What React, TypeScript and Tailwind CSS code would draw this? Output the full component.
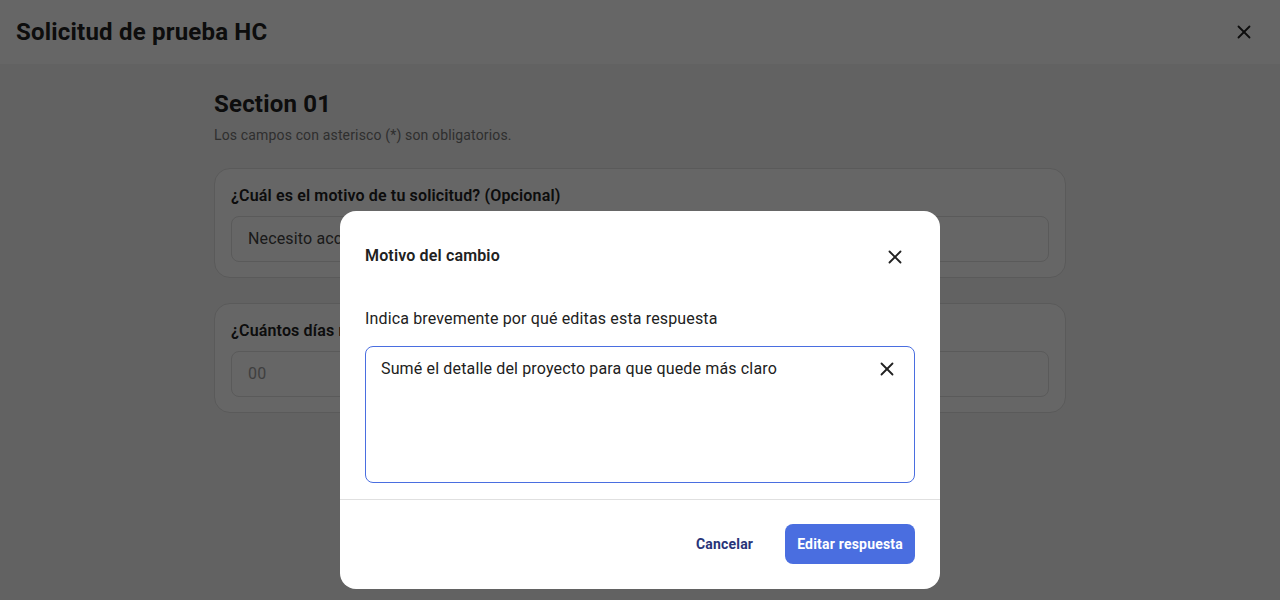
import { X } from "lucide-react";

const font = { fontFamily: "Roboto, 'Noto Sans', Arial, sans-serif" };

function Field({ label, value, muted }: { label: string; value: string; muted?: boolean }) {
  return (
    <div className="h-[110px] rounded-2xl border border-[#e0e0e0] bg-white px-4 pt-[15px]">
      <p className="text-base font-semibold leading-6 tracking-[0.15px] text-[#212121]">{label}</p>
      <div className="mt-[8px] flex h-[46px] items-center rounded-lg border border-[#e0e0e0] px-4">
        <span className={`text-base tracking-[0.15px] ${muted ? "text-[#9e9e9e]" : "text-[#424242]"}`}>{value}</span>
      </div>
    </div>
  );
}

export default function App() {
  return (
    <div className="relative h-[600px] w-full overflow-hidden bg-[#f5f5f5]" style={font}>
      {/* Page under the overlay */}
      <header className="flex h-16 items-center justify-between bg-white px-4">
        <h1 className="text-2xl font-bold tracking-[0.2px] text-[#212121]">Solicitud de prueba HC</h1>
        <X className="mr-[9px] h-[22px] w-[22px] text-[#212121]" strokeWidth={2} />
      </header>

      <main className="mx-auto w-[852px] pt-[24px]">
        <h2 className="text-2xl font-bold leading-8 tracking-[0.2px] text-[#212121]">Section 01</h2>
        <p className="mt-[5px] text-sm tracking-[0.15px] text-[#757575]">Los campos con asterisco (*) son obligatorios.</p>
        <div className="mt-[23px] flex flex-col gap-[25px]">
          <Field label="¿Cuál es el motivo de tu solicitud? (Opcional)" value="Necesito acceso al proyecto" />
          <Field label="¿Cuántos días necesitas?" value="00" muted />
        </div>
      </main>

      {/* Overlay */}
      <div className="absolute inset-0 bg-black/60" />

      {/* Dialog */}
      <div className="absolute left-[340px] top-[211px] w-[600px] rounded-2xl bg-white">
        <div className="px-[25px] pt-[33px]">
          <div className="flex items-center justify-between">
            <h3 className="text-base font-semibold leading-6 tracking-[0.15px] text-[#212121]">Motivo del cambio</h3>
            <X className="mr-[9px] mt-[2px] h-[22px] w-[22px] text-[#212121]" strokeWidth={2} />
          </div>
          <p className="mt-[39px] text-base leading-6 tracking-[0.15px] text-[#212121]">Indica brevemente por qué editas esta respuesta</p>
          <div className="mt-[15px] flex h-[137px] items-start justify-between rounded-lg border border-[#4a6ee0] pl-[15px] pr-[16px] pt-[10px]">
            <span className="text-base leading-6 tracking-[0.15px] text-[#212121]">Sumé el detalle del proyecto para que quede más claro</span>
            <X className="mt-[1px] h-[22px] w-[22px] text-[#212121]" strokeWidth={2} />
          </div>
        </div>
        <div className="mt-[16px] border-t border-[#e0e0e0]" />
        <div className="flex items-center justify-end gap-8 px-[25px] pb-[25px] pt-6">
          <button className="text-sm font-bold tracking-[0.2px] text-[#283479]">Cancelar</button>
          <button className="h-10 rounded-lg bg-[#4a6ee0] px-3 text-sm font-bold tracking-[0.2px] text-white">Editar respuesta</button>
        </div>
      </div>
    </div>
  );
}
